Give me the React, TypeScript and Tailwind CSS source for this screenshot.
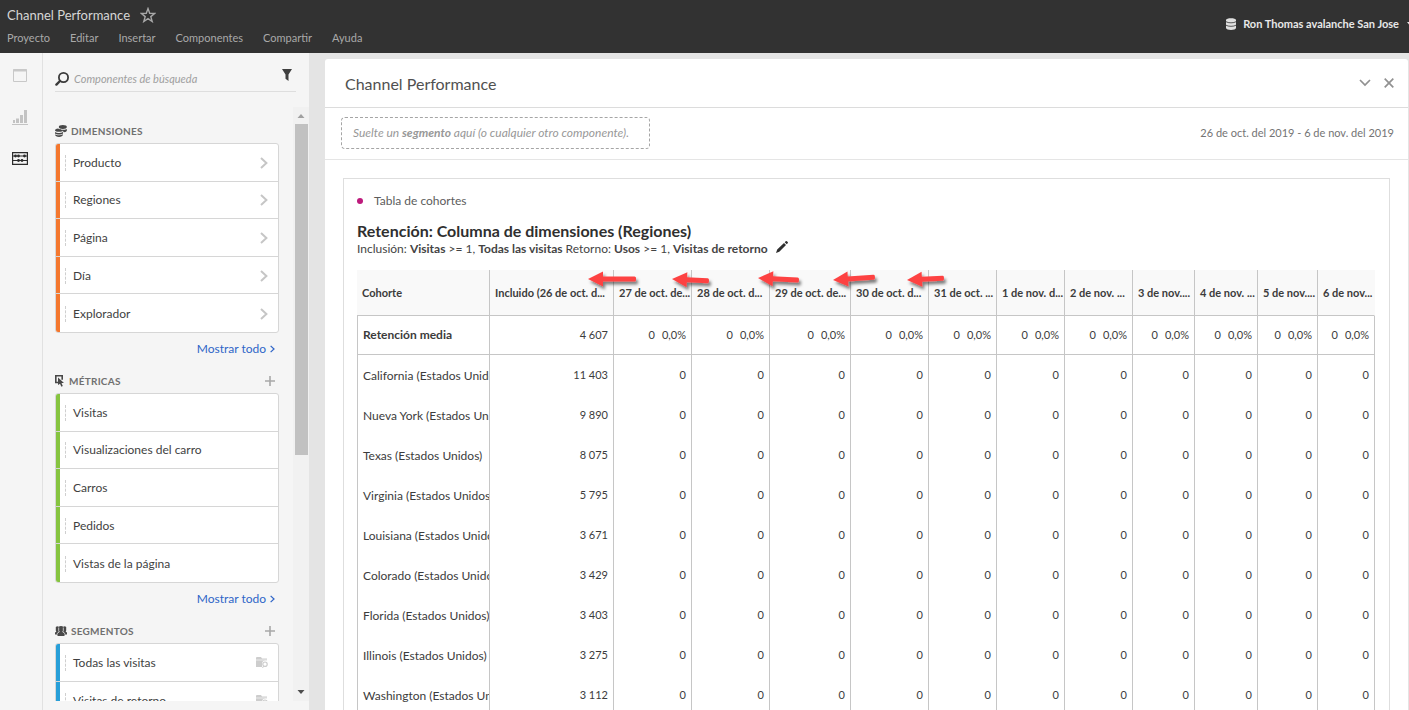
import React from "react";

type Tone = "orange" | "green" | "blue";

const bars: Record<Tone, string> = {
  orange: "bg-[#f4772e]",
  green: "bg-[#86c440]",
  blue: "bg-[#289fd8]",
};

const columns = [
  { label: "Cohorte", width: "w-[133px]" },
  { label: "Incluido (26 de oct. d...", width: "w-[124px]" },
  { label: "27 de oct. de...", width: "w-[78px]" },
  { label: "28 de oct. d...", width: "w-[78px]" },
  { label: "29 de oct. de...", width: "w-[81px]" },
  { label: "30 de oct. d...", width: "w-[78px]" },
  { label: "31 de oct. ...", width: "w-[68px]" },
  { label: "1 de nov. d...", width: "w-[68px]" },
  { label: "2 de nov. ...", width: "w-[68px]" },
  { label: "3 de nov....", width: "w-[62px]" },
  { label: "4 de nov. ...", width: "w-[63px]" },
  { label: "5 de nov....", width: "w-[60px]" },
  { label: "6 de nov...", width: "w-[57px]" },
];

const rows: [string, string][] = [
  ["California (Estados Unidos)", "11 403"],
  ["Nueva York (Estados Unidos)", "9 890"],
  ["Texas (Estados Unidos)", "8 075"],
  ["Virginia (Estados Unidos)", "5 795"],
  ["Louisiana (Estados Unidos)", "3 671"],
  ["Colorado (Estados Unidos)", "3 429"],
  ["Florida (Estados Unidos)", "3 403"],
  ["Illinois (Estados Unidos)", "3 275"],
  ["Washington (Estados Unidos)", "3 112"],
];

const arrows = [
  { x: 231, y: 9, length: 48, angle: 0 },
  { x: 315, y: 9, length: 37, angle: 3 },
  { x: 401, y: 8, length: 41, angle: 3 },
  { x: 476, y: 10, length: 42, angle: -4 },
  { x: 550, y: 10, length: 37, angle: -3 },
];

function Chevron({ className }: { className: string }) {
  return (
    <svg viewBox="0 0 8 12" className={className} fill="none" stroke="currentColor" strokeWidth="2">
      <path d="M1 1l5.400 5L1 11" />
    </svg>
  );
}

function SegmentIcon() {
  return (
    <svg viewBox="0 0 12 11" className="h-[11px] w-3 text-[#cdcdcd]" fill="currentColor">
      <path d="M0 1q0-1 1-1h4l1 1.500h5v2H9.500A3.500 3.500 0 0 0 6 7v3H0z" />
      <circle cx="9" cy="7.200" r="2.200" fill="none" stroke="currentColor" strokeWidth="1.200" />
      <path d="M7.500 8.300l1 .9L6.800 11H6z" />
      <path d="M0 3h11" stroke="#fff" strokeWidth=".6" />
    </svg>
  );
}

function Section({ title, icon, tone, items, add, more = true }: {
  title: string; icon: React.ReactNode; tone: Tone; items: string[]; add?: boolean; more?: boolean;
}) {
  return (
    <section className="shrink-0 pb-[5px]">
      <div className="flex h-6 items-center justify-between pr-1">
        <h2 className="flex items-center gap-1 text-[10px] font-bold tracking-wide text-[#707070]">
          {icon}
          {title}
        </h2>
        {add && (
          <button aria-label={"Agregar " + title.toLowerCase()} className="text-[#a8a8a8]">
            <svg viewBox="0 0 10 10" className="size-[10px]" stroke="currentColor" strokeWidth="1.600">
              <path d="M5 0v10M0 5h10" />
            </svg>
          </button>
        )}
      </div>
      <ul className="grid h-[190px] grid-rows-5 divide-y divide-[#d6d6d6] overflow-hidden rounded-[3px] border border-[#d6d6d6] bg-white">
        {items.map((item) => (
          <li key={item} className="flex min-h-0">
            <span className={"w-1 " + bars[tone]} />
            <button className="flex flex-1 items-center pt-px pr-[10px] pl-[5px] text-left text-xs text-[#3f3f3f]">
              <span className="mr-[7px] h-4 border-l border-dashed border-[#cfcfcf]" />
              <span className="flex-1">{item}</span>
              {tone === "orange" && <Chevron className="h-3 w-2 text-[#c6c6c6]" />}
              {tone === "blue" && <SegmentIcon />}
            </button>
          </li>
        ))}
      </ul>
      {more && (
        <div className="flex h-[31px] items-center justify-end pr-1">
          <a href="#" className="flex items-center gap-1 text-xs text-[#2f65c8]">
            Mostrar todo
            <Chevron className="h-2 w-[5px]" />
          </a>
        </div>
      )}
    </section>
  );
}

function Rail() {
  return (
    <nav className="flex w-[43px] shrink-0 flex-col items-center gap-[27px] border-r border-[#e1e1e1] bg-[#f5f5f5] pt-4 pr-[2px]">
      <button aria-label="Paneles" className="text-[#c8c8c8]">
        <svg viewBox="0 0 14 13" className="h-[13px] w-[14px]" fill="none" stroke="currentColor">
          <path d="M.5.500h13v12H.5z" />
          <path d="M0 1.500h14" strokeWidth="2" />
        </svg>
      </button>
      <button aria-label="Visualizaciones" className="text-[#c3c3c3]">
        <svg viewBox="0 0 16 16" className="size-4" fill="currentColor">
          <path d="M1 11h2v3H1zM4 9.500h3V14H4zM8 6h3v8H8zM12 1h3v13h-3zM0 15h16v1H0z" />
        </svg>
      </button>
      <button aria-label="Componentes" className="text-[#2c2c2c]">
        <svg viewBox="0 0 16 13" className="h-[13px] w-4" fill="currentColor">
          <path d="M.6.600h14.800v11.800H.6zM1 4h14M1 8.500h14" fill="none" stroke="currentColor" strokeWidth="1.200" />
          <circle cx="3.500" cy="4" r="1.400" /><circle cx="6.500" cy="4" r="1.400" /><circle cx="12.500" cy="4" r="1.400" />
          <circle cx="6.500" cy="8.500" r="1.400" /><circle cx="10" cy="8.500" r="1.400" />
        </svg>
      </button>
    </nav>
  );
}

function Sidebar() {
  return (
    <aside className="flex w-[266px] shrink-0 flex-col bg-[#f5f5f5] pb-[9px]">
      <div className="mr-[13px] ml-3 flex h-[39px] items-center border-b border-[#dedede] pt-[14px]">
        <label htmlFor="component-search" className="text-[#3b3b3b]">
          <span className="sr-only">Buscar</span>
          <svg viewBox="0 0 14 14" className="size-[14px]" fill="none" stroke="currentColor">
            <circle cx="8.500" cy="5.500" r="4.600" strokeWidth="1.800" />
            <path d="M5 9l-3.600 3.600" strokeWidth="2.400" strokeLinecap="round" />
          </svg>
        </label>
        <input
          id="component-search"
          placeholder="Componentes de búsqueda"
          className="ml-[5px] min-w-0 flex-1 bg-transparent text-[11px] italic outline-none placeholder:text-[#a0a0a0]"
        />
        <button aria-label="Filtrar" className="mr-1 mb-2 text-[#3f3f3f]">
          <svg viewBox="0 0 10 12" className="h-3 w-[10px]" fill="currentColor"><path d="M0 0h10L6.500 5.500V12L3.500 9.800V5.500z" /></svg>
        </button>
      </div>
      <div className="mt-[15px] flex min-h-0 flex-1">
        <div className="min-w-0 flex-1 overflow-hidden pt-3 pr-[14px] pl-3">
          <Section
            title="DIMENSIONES"
            tone="orange"
            items={["Producto", "Regiones", "Página", "Día", "Explorador"]}
            icon={
              <svg viewBox="0 0 12 12" className="size-3 text-[#484848]" fill="currentColor">
                <ellipse cx="7.800" cy="2" rx="4" ry="1.900" />
                <path d="M5 4.300c2 .8 4.500.8 6.800-.3v2c-.8.800-1.800 1.200-3 1.300C8.500 6 7 5.200 5 5z" />
                <path d="M3 3.600C1 3.800 0 4.600 0 5.400c0 1.800 7.800 2 7.800 0z" />
                <path d="M0 6.900c2 1.300 5.800 1.400 8 .2v1.400c-2 1.300-6 1.300-8 0z" />
                <path d="M0 9.300c2 1.300 5.800 1.300 8 0 .2 3.400-8 3.500-8 0z" />
              </svg>
            }
          />
          <Section
            title="MÉTRICAS"
            tone="green"
            add
            items={["Visitas", "Visualizaciones del carro", "Carros", "Pedidos", "Vistas de la página"]}
            icon={
              <svg viewBox="0 0 10 12" className="h-3 w-[10px] text-[#484848]" fill="currentColor">
                <path d="M3 7.500H.8V.8h6.400v4" fill="none" stroke="currentColor" strokeWidth="1.600" />
                <path d="M3 2.500l6 5.500H6.500l1.300 3-1.400.7-1.400-3L3 10z" />
              </svg>
            }
          />
          <Section
            title="SEGMENTOS"
            tone="blue"
            add
            more={false}
            items={["Todas las visitas", "Visitas de retorno"]}
            icon={
              <svg viewBox="0 0 12 10" className="h-[10px] w-3 text-[#484848]" fill="currentColor">
                <path d="M.8 1Q2.300-.2 3.600.8 6-.8 8.400.8 9.700-.2 11.200 1v3.500l-.5 1.200 1.300.8V8.500H9.500V10h-7V8.500H0V6.500l1.300-.8L.8 4.500z" />
                <path d="M3.700 1.500v3.300l.6 1.200-2 1.200v1M8.300 1.500v3.300L7.700 6l2 1.200v1" fill="none" stroke="#f5f5f5" strokeWidth=".7" />
              </svg>
            }
          />
        </div>
        <div className="flex w-4 shrink-0 flex-col items-center bg-[#f1f1f1]">
          <svg viewBox="0 0 16 17" className="h-[17px] w-4" fill="#a0a0a0"><path d="M4.500 11L8 7l3.500 4z" /></svg>
          <div className="h-[331px] w-[13px] bg-[#c1c1c1]" />
          <svg viewBox="0 0 16 17" className="mt-auto h-[17px] w-4" fill="#4d4d4d"><path d="M4.500 6L8 10l3.500-4z" /></svg>
        </div>
      </div>
    </aside>
  );
}

function CohortTable() {
  const cell = "border-r border-[#c6c6c6] pt-px px-[5px] text-right";
  return (
    <div className="relative">
      <table className="w-full table-fixed border-separate border-spacing-0 text-[11px] text-[#3c3c3c]">
        <colgroup>
          {columns.map((c) => <col key={c.label} className={c.width} />)}
        </colgroup>
        <thead>
          <tr className="h-[46px] bg-[#f9f9f9]">
            {columns.map((c) => (
              <th key={c.label} className="overflow-hidden border-r border-b border-[#c6c6c6] pt-px pl-[5px] text-left font-bold whitespace-nowrap last:border-r-[#f9f9f9]">
                {c.label}
              </th>
            ))}
          </tr>
        </thead>
        <tbody>
          <tr className="h-[39px]">
            <th className="truncate border-x border-b border-[#c6c6c6] pl-[5px] text-left text-xs font-bold">Retención media</th>
            <td className={cell + " border-b"}>4 607</td>
            {columns.slice(2).map((c) => (
              <td key={c.label} className={cell + " border-b"}>
                <span className="mr-[7px]">0</span>0,0%
              </td>
            ))}
          </tr>
          {rows.map(([name, value]) => (
            <tr key={name} className="h-10">
              <td className="overflow-hidden border-x border-[#c6c6c6] pt-px pl-[5px] text-left text-xs text-clip whitespace-nowrap">{name}</td>
              <td className={cell}>{value}</td>
              {columns.slice(2).map((c) => <td key={c.label} className={cell}>0</td>)}
            </tr>
          ))}
        </tbody>
      </table>
      <svg className="pointer-events-none absolute top-0 left-0 h-8 w-full overflow-visible" fill="#fd4343">
        <defs>
          <filter id="arrow-shadow" x="-20%" y="-50%" width="150%" height="250%">
            <feDropShadow dx="2" dy="3" stdDeviation="1.500" floodColor="#000" floodOpacity="0.5" />
          </filter>
        </defs>
        {arrows.map((a) => (
          <g key={a.x} filter="url(#arrow-shadow)">
            <g transform={`translate(${a.x} ${a.y}) rotate(${a.angle})`}>
              <path d="M0 0L15-7.500V7.500z" />
              <rect x="13" y="-2.500" width={a.length - 13} height="5" rx="1.500" />
            </g>
          </g>
        ))}
      </svg>
    </div>
  );
}

export default function App() {
  return (
    <div className="flex h-screen flex-col overflow-hidden bg-[#e4e4e4] font-['Lato',sans-serif]">
      <header className="flex h-[53px] shrink-0 items-start justify-between bg-[#323232] pl-[7px]">
        <div>
          <div className="flex h-[30px] items-center gap-[10px]">
            <h1 className="pt-px text-[13px] text-[#d6d6d6]">Channel Performance</h1>
            <button aria-label="Favorito" className="text-[#a8a8a8]">
              <svg viewBox="0 0 16 16" className="size-4" fill="none" stroke="currentColor" strokeWidth="1.400">
                <path d="M8 1.600l1.700 4.700 5 .2-3.900 3.100 1.400 4.900L8 11.700l-4.200 2.800 1.400-4.900-3.900-3.100 5-.2z" />
              </svg>
            </button>
          </div>
          <nav className="flex h-4 items-center gap-5 text-[11px] text-[#a9a9a9]">
            {["Proyecto", "Editar", "Insertar", "Componentes", "Compartir", "Ayuda"].map((m) => (
              <a key={m} href="#">{m}</a>
            ))}
          </nav>
        </div>
        <button className="flex h-12 items-center text-[11px] font-bold text-[#e8e8e8]">
          <svg viewBox="0 0 10 12" className="mr-[7px] h-3 w-[10px]" fill="#e0e0e0">
            <path d="M0 2C0-.5 10-.5 10 2v8c0 2.500-10 2.500-10 0z" />
            <path d="M0 3.700c2 1.500 8 1.500 10 0M0 7.200c2 1.500 8 1.500 10 0" fill="none" stroke="#323232" strokeWidth=".8" />
          </svg>
          Ron Thomas avalanche San Jose
          <span className="ml-2 w-[2px] overflow-hidden">
            <svg viewBox="0 0 8 5" className="h-[5px] w-2" fill="currentColor"><path d="M0 0h8L4 5z" /></svg>
          </span>
        </button>
      </header>
      <div className="flex min-h-0 flex-1">
        <Rail />
        <Sidebar />
        <main className="min-w-0 flex-1 pt-[6px] pr-px pl-4">
          <div className="min-h-full rounded-t-[3px] bg-white">
            <div className="flex h-[49px] items-center justify-between border-b border-[#dcdcdc] pt-px pr-[14px] pl-5">
              <h2 className="text-base text-[#505050]">Channel Performance</h2>
              <div className="flex items-center gap-[13px] pb-[2px] text-[#919191]">
                <button aria-label="Contraer">
                  <svg viewBox="0 0 12 8" className="h-2 w-3" fill="none" stroke="currentColor" strokeWidth="1.700"><path d="M1 1l5 5 5-5" /></svg>
                </button>
                <button aria-label="Cerrar">
                  <svg viewBox="0 0 10 10" className="size-[10px]" fill="none" stroke="currentColor" strokeWidth="1.700"><path d="M.7.700l8.600 8.600M9.300.700L.7 9.300" /></svg>
                </button>
              </div>
            </div>
            <div className="flex h-[52px] items-center justify-between border-b border-[#e5e5e5] pr-[14px] pb-px pl-4">
              <div className="flex h-8 w-[309px] items-center rounded-[4px] border border-dashed border-[#a5a5a5] pl-[11px] text-xs text-[#989898] italic">
                <p>Suelte un <b>segmento</b> aquí (o cualquier otro componente).</p>
              </div>
              <button className="text-[11px] text-[#747474]">26 de oct. del 2019 - 6 de nov. del 2019</button>
            </div>
            <div className="mx-[18px] mt-[18px] border border-[#dedede] pt-3 pr-[14px] pl-[13px]">
              <div className="flex h-5 items-center gap-[11px]">
                <span className="size-[6px] rounded-full bg-[#bd1a7c]" />
                <h3 className="text-xs text-[#5c5c5c]">Tabla de cohortes</h3>
              </div>
              <h4 className="mt-[10px] text-base leading-5 font-bold text-[#2f2f2f]">Retención: Columna de dimensiones (Regiones)</h4>
              <div className="flex h-4 items-center gap-2 text-xs text-[#444]">
                <p>
                  Inclusión: <b>Visitas</b> &gt;= 1, <b>Todas las visitas</b> Retorno: <b>Usos</b> &gt;= 1, <b>Visitas de retorno</b>
                </p>
                <button aria-label="Editar" className="pb-1">
                  <svg viewBox="0 0 12 12" className="size-3" fill="#2f2f2f"><path d="M0 12l1.200-3.400L8 2l2 2-6.700 6.800zM8.700 1.300L9.700.300q.6-.5 1.200 0l.8.800q.5.600 0 1.200l-1 1z" /></svg>
                </button>
              </div>
              <div className="mt-[13px]">
                <CohortTable />
              </div>
            </div>
          </div>
        </main>
      </div>
    </div>
  );
}
